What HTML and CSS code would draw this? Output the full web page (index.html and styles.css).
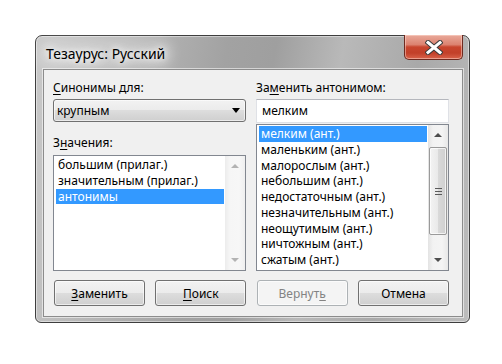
FILE: index.html
```html
<!DOCTYPE html>
<html lang="ru">
<head>
    <meta charset="UTF-8">
    <title>Тезаурус: Русский</title>
    <link rel="stylesheet" href="styles.css">
</head>
<body>
    <div class="window">
        <div class="titlebar">
            <span class="title">Тезаурус: Русский</span>
            <div class="close">
                <svg width="18" height="15" viewBox="0 0 18 15">
                    <path d="M3 2.5 L15 12.5 M15 2.5 L3 12.5" stroke="#3b3b3b" stroke-width="5" stroke-linecap="square"/>
                    <path d="M3 2.5 L15 12.5 M15 2.5 L3 12.5" stroke="#fff" stroke-width="3" stroke-linecap="square"/>
                </svg>
            </div>
        </div>
        <div class="client">
            <div class="columns">
                <div class="col">
                    <div class="label"><u>С</u>инонимы для:</div>
                    <div class="combo">
                        <span>крупным</span>
                        <span class="drop"></span>
                    </div>
                    <div class="label label-gap">З<u>н</u>ачения:</div>
                    <div class="list list-meanings">
                        <div class="items">
                            <div class="item">большим (прилаг.)</div>
                            <div class="item">значительным (прилаг.)</div>
                            <div class="item selected">антонимы</div>
                        </div>
                        <div class="scrollbar disabled">
                            <div class="sb-btn"><span class="tri up"></span></div>
                            <div class="track"></div>
                            <div class="sb-btn"><span class="tri down"></span></div>
                        </div>
                    </div>
                </div>
                <div class="col">
                    <div class="label">За<u>м</u>енить антонимом:</div>
                    <div class="edit">мелким</div>
                    <div class="list list-words">
                        <div class="items">
                            <div class="item selected">мелким (ант.)</div>
                            <div class="item">маленьким (ант.)</div>
                            <div class="item">малорослым (ант.)</div>
                            <div class="item">небольшим (ант.)</div>
                            <div class="item">недостаточным (ант.)</div>
                            <div class="item">незначительным (ант.)</div>
                            <div class="item">неощутимым (ант.)</div>
                            <div class="item">ничтожным (ант.)</div>
                            <div class="item">сжатым (ант.)</div>
                        </div>
                        <div class="scrollbar">
                            <div class="sb-btn"><span class="tri up"></span></div>
                            <div class="track">
                                <div class="thumb"><span class="grip"></span></div>
                            </div>
                            <div class="sb-btn"><span class="tri down"></span></div>
                        </div>
                    </div>
                </div>
            </div>
            <div class="buttons">
                <div class="btn"><u>З</u>аменить</div>
                <div class="btn"><u>П</u>оиск</div>
                <div class="btn btn-disabled">Вернут<u>ь</u></div>
                <div class="btn">Отмена</div>
            </div>
        </div>
    </div>
</body>
</html>
```

FILE: styles.css
```css
* {
    box-sizing: border-box;
}
body {
    margin: 0;
    padding: 35px 0 0 35px;
    background: #fff;
    font-family: 'Noto Sans', 'Open Sans', sans-serif;
    font-size: 12px;
    color: #000;
}
u {
    text-decoration: underline;
    text-underline-offset: 2px;
    text-decoration-thickness: 1px;
}
.window {
    width: 435px;
    height: 288px;
    display: flex;
    flex-direction: column;
    padding: 0 6px 5px 7px;
    border: 1px solid #3e3e3e;
    border-radius: 7px 7px 6px 6px;
    background: linear-gradient(100deg, #c9c9c9 0%, #bababa 18%, #a2a2a2 40%, #9f9f9f 50%, #b9b9b9 64%, #a9a9a9 80%, #bdbdbd 100%);
    box-shadow: inset 0 0 0 1px rgba(255, 255, 255, 0.45);
}
.titlebar {
    height: 33px;
    display: flex;
    align-items: flex-start;
}
.title {
    margin: 8px 0 0 1px;
    padding: 0 2px;
    font-size: 14px;
    line-height: 19px;
    color: #000;
    border-radius: 8px;
    background: rgba(255, 255, 255, 0.18);
    box-shadow: 0 0 12px 6px rgba(255, 255, 255, 0.22);
    text-shadow: 0 0 6px #fff, 0 0 10px #fff, 0 0 14px rgba(255, 255, 255, 0.9);
}
.close {
    margin: -1px 0 0 auto;
    width: 59px;
    height: 25px;
    display: flex;
    align-items: center;
    justify-content: center;
    border: 1px solid #6e2a20;
    border-top: none;
    border-radius: 0 0 5px 5px;
    background: linear-gradient(#e9aa9b 0%, #dc8270 40%, #c8452e 50%, #c24029 75%, #d9634a 100%);
    box-shadow: inset 0 0 0 1px rgba(255, 220, 210, 0.5);
}
.client {
    flex: 1;
    display: flex;
    flex-direction: column;
    padding: 10px 13px 0 9px;
    background: #f0f0f0;
    border: 1px solid #8c8c8c;
    box-shadow: 0 0 0 1px rgba(255, 255, 255, 0.55);
}
.columns {
    display: grid;
    grid-template-columns: 193px 193px;
    column-gap: 10px;
}
.col {
    display: flex;
    flex-direction: column;
}
.label {
    height: 15px;
    line-height: 15px;
    white-space: nowrap;
}
.label-gap {
    margin-top: 13px;
}
.combo {
    margin-top: 4px;
    height: 23px;
    display: flex;
    align-items: center;
    justify-content: space-between;
    padding: 0 5px 0 3px;
    border: 1px solid #707070;
    border-radius: 3px;
    background: linear-gradient(#f2f2f2 0%, #ebebeb 50%, #dddddd 50%, #cfcfcf 100%);
    box-shadow: inset 0 0 0 1px rgba(255, 255, 255, 0.6);
}
.drop {
    width: 0;
    height: 0;
    border-left: 4.5px solid transparent;
    border-right: 4.5px solid transparent;
    border-top: 5px solid #000;
}
.edit {
    margin-top: 4px;
    height: 24px;
    padding: 0 5px;
    line-height: 22px;
    background: #fff;
    border: 1px solid #dfe1e6;
    border-top-color: #b5b7bd;
}
.list {
    display: flex;
    background: #fff;
    border: 1px solid #828790;
    overflow: hidden;
}
.list-meanings {
    margin-top: 5px;
    height: 116px;
}
.list-words {
    margin-top: 1px;
    height: 147px;
}
.items {
    flex: 1;
    padding: 1px 1px 0 2px;
    overflow: hidden;
}
.item {
    height: 15.75px;
    line-height: 15.75px;
    padding-left: 2px;
    white-space: nowrap;
}
.item.selected {
    background: #3399ff;
    color: #fff;
}
.scrollbar {
    width: 20px;
    display: flex;
    flex-direction: column;
    background: linear-gradient(to right, #e3e3e3, #f2f2f2 25%, #f4f4f4 70%, #e8e8e8);
}
.scrollbar.disabled {
    background: linear-gradient(to right, #ececec, #f6f6f6 25%, #f7f7f7 70%, #efefef);
}
.sb-btn {
    height: 20px;
    display: flex;
    align-items: center;
    justify-content: center;
}
.tri {
    width: 0;
    height: 0;
    border-left: 4px solid transparent;
    border-right: 4px solid transparent;
}
.tri.up {
    border-bottom: 4px solid #4d4d4d;
}
.tri.down {
    border-top: 4px solid #4d4d4d;
}
.disabled .tri.up {
    border-bottom-color: #b3b3b3;
}
.disabled .tri.down {
    border-top-color: #b3b3b3;
}
.track {
    flex: 1;
    padding: 2px 1px 0 1px;
}
.thumb {
    height: 88px;
    display: flex;
    align-items: center;
    justify-content: center;
    border: 1px solid #9a9a9a;
    border-radius: 2px;
    background: linear-gradient(to right, #f3f3f3 0%, #e9e9e9 50%, #d9d9d9 50%, #d0d0d0 100%);
    box-shadow: inset 0 0 0 1px rgba(255, 255, 255, 0.7);
}
.grip {
    width: 7px;
    height: 7px;
    background: repeating-linear-gradient(#5a5a5a 0 1px, transparent 1px 3px);
}
.buttons {
    margin-top: 9px;
    display: flex;
    justify-content: space-between;
    padding-left: 1px;
    width: 396px;
}
.btn {
    width: 91px;
    height: 26px;
    display: flex;
    align-items: center;
    justify-content: center;
    border: 1px solid #707070;
    border-radius: 3px;
    background: linear-gradient(#f2f2f2 0%, #ebebeb 50%, #dddddd 50%, #cfcfcf 100%);
    box-shadow: inset 0 0 0 1px rgba(255, 255, 255, 0.6);
}
.btn-disabled {
    color: #838383;
    border-color: #adb2b5;
    background: #f4f4f4;
}
```
